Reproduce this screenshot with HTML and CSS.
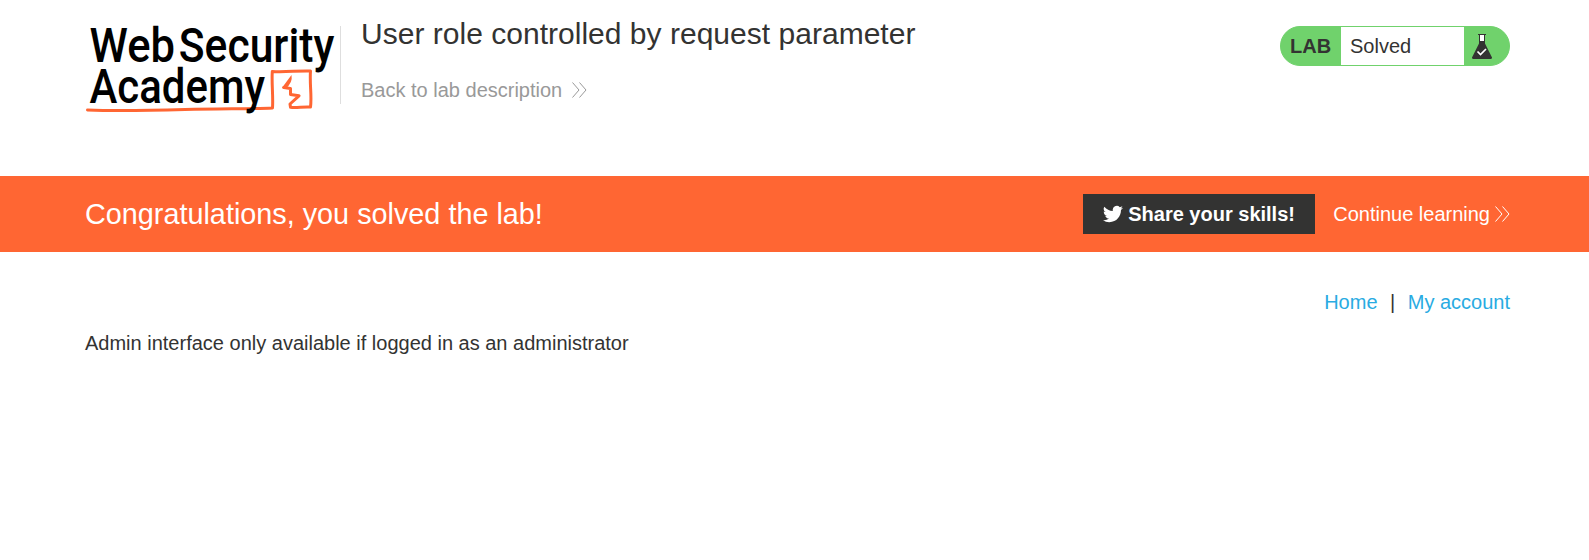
FILE: index.html
```html
<!DOCTYPE html>
<html lang="en">
<head>
<meta charset="utf-8">
<title>User role controlled by request parameter</title>
<link rel="stylesheet" href="styles.css">
</head>
<body>
<header class="lab-header">
  <svg class="logo" viewBox="85 10 256 120" role="img" aria-label="Web Security Academy">
    <path class="logo-line" d="M87.500 110C115 111 145 110.600 185 109.500C220 108.500 250 109 272.500 108C273.300 95 271.500 84 272.300 71.500C285 72.500 298 70.500 310.500 71C309.500 84 312 96 310.500 107C303 106.500 297 108 290.500 107.300L290 104L299 95.800L290.500 94.500L290.500 88.500L283.800 87.500"/>
    <path fill="#ff6633" d="M291.500 75L282 87.800L285.500 88.800Q293 82.500 291.500 75z"/>
    <text class="logo-text" x="89.500" y="62" textLength="85.500" lengthAdjust="spacingAndGlyphs">Web</text>
    <text class="logo-text" x="178.800" y="62" textLength="155.500" lengthAdjust="spacingAndGlyphs">Security</text>
    <text class="logo-text" x="89.500" y="102.700" textLength="175.500" lengthAdjust="spacingAndGlyphs">Academy</text>
  </svg>
  <div class="title-block">
    <h1 class="title">User role controlled by request parameter</h1>
    <a class="back-link">Back to lab description
      <svg class="chevrons" viewBox="0 0 15 16"><path d="M.5 .5 7 8 .5 15.500M7.500 .5 14 8 7.500 15.500"/></svg>
    </a>
  </div>
  <div class="lab-status">
    <span class="status-label">LAB</span>
    <span class="status-value">Solved</span>
    <span class="status-icon">
      <svg class="flask" viewBox="0 0 20 26"><path fill="#333332" d="M7 7h6v2.500L20 23.500Q20.200 25 18.500 25h-17Q-.2 25 0 23.500L7 9.500z"/><path fill="#fff" d="M7.500 1h5v6h-5z"/><path fill="none" stroke="#333332" d="M6 .5h8M7.500 1v7M12.500 1v7"/><path fill="none" stroke="#fff" stroke-width="1.700" d="m5.500 17.500 3 3 5.500-5.500"/></svg>
    </span>
  </div>
</header>
<section class="banner">
  <p class="banner-text">Congratulations, you solved the lab!</p>
  <a class="share">
    <svg class="bird" viewBox="0 0 24 24"><path fill="#fff" d="M23.950 4.570a10 10 0 0 1-2.820.77 4.960 4.960 0 0 0 2.160-2.720 9.900 9.900 0 0 1-3.120 1.180 4.920 4.920 0 0 0-8.380 4.480A13.930 13.930 0 0 1 1.640 3.160a4.920 4.920 0 0 0 1.520 6.570 4.900 4.900 0 0 1-2.230-.61v.06a4.920 4.920 0 0 0 3.950 4.830 5 5 0 0 1-2.210.08 4.940 4.940 0 0 0 4.600 3.420A9.870 9.870 0 0 1 0 19.540a13.990 13.990 0 0 0 7.550 2.210c9.050 0 14-7.500 14-13.980 0-.21 0-.42-.02-.63a9.940 9.940 0 0 0 2.460-2.550z"/></svg>
    <span>Share your skills!</span>
  </a>
  <a class="continue">Continue learning
    <svg class="chevrons" viewBox="0 0 15 16"><path d="M.5 .5 7 8 .5 15.500M7.500 .5 14 8 7.500 15.500"/></svg>
  </a>
</section>
<main class="content">
  <nav class="links"><a class="link">Home</a><span>|</span><a class="link">My account</a></nav>
  <p class="message">Admin interface only available if logged in as an administrator</p>
</main>
</body>
</html>
```
FILE: styles.css
```css
* { box-sizing: border-box; }
body { margin: 0; background: #fff; color: #333332; font: 20px/23px "Liberation Sans", Arial, sans-serif; }
h1, p { margin: 0; font-weight: normal; }
.lab-header { display: flex; align-items: flex-start; height: 176px; padding: 0 79px 0 85px; }
.logo { width: 256px; height: 120px; margin-top: 10px; flex: none; }
.logo-text { font: 500 47.500px Roboto, sans-serif; fill: #000; }
.logo-line { fill: none; stroke: #ff6633; stroke-width: 3; stroke-linejoin: round; stroke-linecap: round; }
.title-block { position: relative; padding: 17px 0 0 20px; }
.title-block::before { content: ""; position: absolute; left: -1px; top: 26px; width: 1px; height: 78px; background: #dedede; }
.title { font-size: 30px; line-height: 34px; letter-spacing: .02px; }
.back-link { display: flex; align-items: flex-start; gap: 10px; margin-top: 28px; color: #999; }
.back-link .chevrons { margin-top: 3px; }
.chevrons { width: 15px; height: 16px; flex: none; fill: none; stroke: currentColor; stroke-width: 1; }
.lab-status { display: flex; width: 230px; height: 40px; margin: 26px 0 0 auto; border: 1px solid #70d26c; border-radius: 20px; background: #70d26c; overflow: hidden; }
.status-label { width: 60px; padding: 8px 0 0 9px; font-weight: bold; }
.status-value { width: 123px; padding: 8px 0 0 9px; background: #fff; }
.status-icon { padding: 7px 0 0 8px; }
.flask { display: block; width: 20px; height: 26px; }
.banner { display: flex; align-items: center; height: 76px; padding: 0 79px 0 85px; background: #ff6633; color: #fff; }
.banner-text { margin-right: auto; font-size: 28.800px; line-height: 34px; }
.share { display: flex; align-items: center; gap: 6px; width: 232px; height: 40px; padding-left: 20px; background: #333332; font-weight: bold; }
.share span { margin-left: -1px; }
.bird { width: 20px; height: 20px; }
.continue { display: flex; align-items: center; gap: 5px; margin-left: 18px; }
.content { padding: 39px 79px 0 85px; }
.links { display: flex; justify-content: flex-end; gap: 12.500px; }
.link { color: #29abe2; }
.message { margin-top: 18px; }
```
